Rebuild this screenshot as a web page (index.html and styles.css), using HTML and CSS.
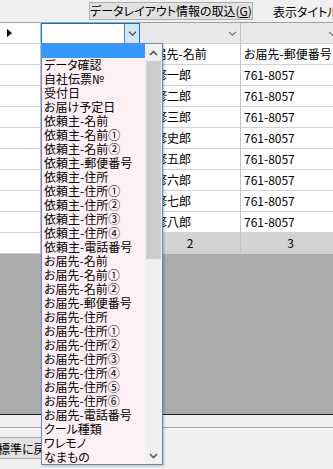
FILE: index.html
```html
<!DOCTYPE html>
<html lang="ja">
<head>
<meta charset="utf-8">
<link rel="stylesheet" href="styles.css">
</head>
<body>
<div class="toolbar">
  <button class="btn btn-import">データレイアウト情報の取込(<u>G</u>)</button>
  <span class="caption">表示タイトル</span>
</div>
<div class="grid">
  <div class="rh"><span class="arrow"></span></div>
  <div class="cell combo-active"><span class="combo-btn"><svg width="9" height="5" viewBox="0 0 9 5"><path d="M1 .8l3.5 3.4L8 .8" fill="none" stroke="#4a4a4a" stroke-width="1.2"/></svg></span></div>
  <div class="cell combo"><svg width="9" height="5" viewBox="0 0 9 5"><path d="M1 .8l3.5 3.4L8 .8" fill="none" stroke="#707070" stroke-width="1.1"/></svg></div>
  <div class="cell combo"><svg width="9" height="5" viewBox="0 0 9 5"><path d="M1 .8l3.5 3.4L8 .8" fill="none" stroke="#707070" stroke-width="1.1"/></svg></div>

  <div class="rh"></div><div class="cell"></div><div class="cell">お届先-名前</div><div class="cell">お届先-郵便番号</div>
  <div class="rh"></div><div class="cell"></div><div class="cell">高修一郎</div><div class="cell">761-8057</div>
  <div class="rh"></div><div class="cell"></div><div class="cell">高修二郎</div><div class="cell">761-8057</div>
  <div class="rh"></div><div class="cell"></div><div class="cell">高修三郎</div><div class="cell">761-8057</div>
  <div class="rh"></div><div class="cell"></div><div class="cell">高修史郎</div><div class="cell">761-8057</div>
  <div class="rh"></div><div class="cell"></div><div class="cell">高修五郎</div><div class="cell">761-8057</div>
  <div class="rh"></div><div class="cell"></div><div class="cell">高修六郎</div><div class="cell">761-8057</div>
  <div class="rh"></div><div class="cell"></div><div class="cell">高修七郎</div><div class="cell">761-8057</div>
  <div class="rh"></div><div class="cell"></div><div class="cell">高修八郎</div><div class="cell">761-8057</div>
  <div class="rh"></div><div class="cell foot">1</div><div class="cell foot">2</div><div class="cell foot">3</div>
</div>
<div class="bottom">
  <div class="sep"></div>
  <button class="btn btn-reset">標準に戻す</button>
</div>

<div class="dropdown">
  <div class="items">
    <div class="item sel"></div>
    <div class="item">データ確認</div>
    <div class="item">自社伝票№</div>
    <div class="item">受付日</div>
    <div class="item">お届け予定日</div>
    <div class="item">依頼主-名前</div>
    <div class="item">依頼主-名前①</div>
    <div class="item">依頼主-名前②</div>
    <div class="item">依頼主-郵便番号</div>
    <div class="item">依頼主-住所</div>
    <div class="item">依頼主-住所①</div>
    <div class="item">依頼主-住所②</div>
    <div class="item">依頼主-住所③</div>
    <div class="item">依頼主-住所④</div>
    <div class="item">依頼主-電話番号</div>
    <div class="item">お届先-名前</div>
    <div class="item">お届先-名前①</div>
    <div class="item">お届先-名前②</div>
    <div class="item">お届先-郵便番号</div>
    <div class="item">お届先-住所</div>
    <div class="item">お届先-住所①</div>
    <div class="item">お届先-住所②</div>
    <div class="item">お届先-住所③</div>
    <div class="item">お届先-住所④</div>
    <div class="item">お届先-住所⑤</div>
    <div class="item">お届先-住所⑥</div>
    <div class="item">お届先-電話番号</div>
    <div class="item">クール種類</div>
    <div class="item">ワレモノ</div>
    <div class="item">なまもの</div>
  </div>
  <div class="vscroll">
    <div class="sb-btn"><svg width="9" height="6" viewBox="0 0 9 6"><path d="M1 5L4.5 1.5L8 5" fill="none" stroke="#555" stroke-width="1.6"/></svg></div>
    <div class="track"><div class="thumb"></div></div>
    <div class="sb-btn"><svg width="9" height="6" viewBox="0 0 9 6"><path d="M1 1L4.5 4.5L8 1" fill="none" stroke="#555" stroke-width="1.6"/></svg></div>
  </div>
</div>
</body>
</html>
```
FILE: styles.css
```css
body {
  margin: 0;
  width: 333px;
  height: 469px;
  overflow: hidden;
  position: relative;
  background: #f0f0f0;
  font-family: "Noto Sans CJK JP", sans-serif;
  font-size: 12px;
  font-feature-settings: "palt";
  color: #000;
}

.toolbar {
  height: 22px;
  box-sizing: border-box;
  display: flex;
  align-items: center;
  padding-left: 89px;
  white-space: nowrap;
}

.btn {
  font: inherit;
  font-feature-settings: "palt";
  color: #000;
  border: 1px solid #adadad;
  background: #e1e1e1;
  padding: 0;
  box-sizing: border-box;
}

.btn-import {
  width: 164px;
  height: 18px;
  line-height: 16px;
}

.caption {
  margin-left: 20px;
}

.grid {
  height: 393px;
  box-sizing: border-box;
  border-top: 1px solid #a0a0a0;
  border-bottom: 1px solid #1e1e1e;
  background: #ababab;
  display: grid;
  grid-template-columns: 41px 99px 101px 100px;
  grid-auto-rows: 21px;
  align-content: start;
  overflow: hidden;
}

.rh,
.cell {
  box-sizing: border-box;
  border-bottom: 1px solid #d2d2d2;
  border-right: 1px solid #c4c4c4;
  background: #fff;
  display: flex;
  align-items: center;
  padding-left: 3px;
  white-space: nowrap;
  overflow: hidden;
  line-height: 16px;
}

.arrow {
  width: 0;
  height: 0;
  border-left: 5px solid #000;
  border-top: 4px solid transparent;
  border-bottom: 4px solid transparent;
  margin-left: 4px;
}

.combo {
  background: #e8e8e8;
  justify-content: flex-end;
  padding-right: 3px;
}

.combo-active {
  border: 1px solid #0078d7;
  justify-content: flex-end;
  padding: 0;
}

.combo-btn {
  width: 15px;
  height: 100%;
  box-sizing: border-box;
  background: #d4e6f6;
  border-left: 1px solid #3d87cc;
  display: flex;
  align-items: center;
  justify-content: center;
}

.foot {
  background: #d3d3d3;
  justify-content: center;
  padding: 0;
}

.bottom {
  height: 54px;
  box-sizing: border-box;
  padding-top: 12px;
}

.sep {
  border-top: 1px solid #a0a0a0;
  border-bottom: 1px solid #fff;
}

.btn-reset {
  display: block;
  margin-top: 8px;
  margin-left: -21px;
  padding-left: 18px;
  width: 100px;
  height: 22px;
  text-align: left;
}

.dropdown {
  position: absolute;
  left: 41px;
  top: 43px;
  width: 122px;
  height: 422px;
  box-sizing: border-box;
  border: 1px solid #5c8fc7;
  background: #fff0f5;
  display: flex;
  box-shadow: 1px 1px 2px rgba(0, 0, 0, 0.25);
}

.items {
  flex: 1;
  min-width: 0;
}

.item {
  height: 14px;
  line-height: 14px;
  padding-left: 2px;
  white-space: nowrap;
}

.item.sel {
  background: #3399ff;
}

.vscroll {
  width: 17px;
  background: #f0f0f0;
  display: flex;
  flex-direction: column;
}

.sb-btn {
  height: 17px;
  display: flex;
  align-items: center;
  justify-content: center;
}

.track {
  flex: 1;
  padding: 0 1px;
}

.thumb {
  height: 198px;
  background: #cdcdcd;
}
```
